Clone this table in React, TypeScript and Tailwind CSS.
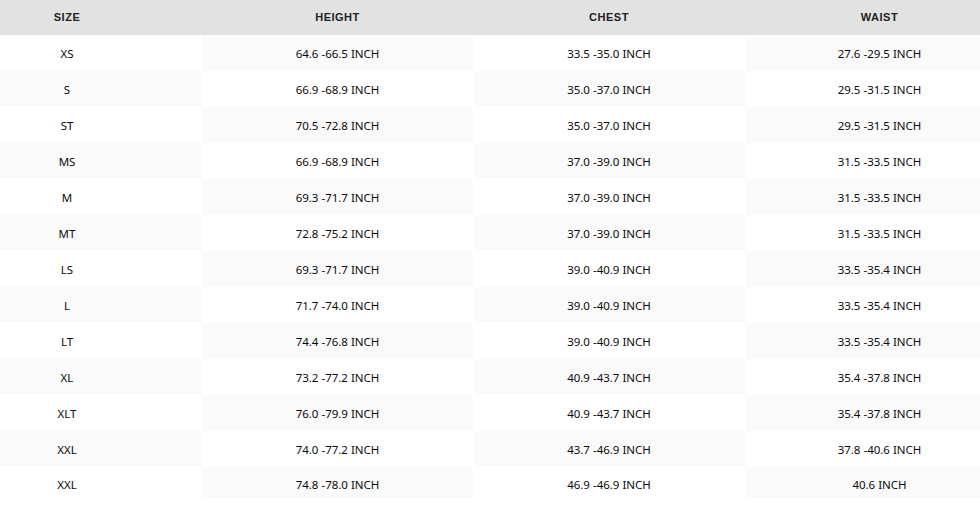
import React from "react";

const rows: [string, string, string, string][] = [
  ["XS", "64.6 -66.5 INCH", "33.5 -35.0 INCH", "27.6 -29.5 INCH"],
  ["S", "66.9 -68.9 INCH", "35.0 -37.0 INCH", "29.5 -31.5 INCH"],
  ["ST", "70.5 -72.8 INCH", "35.0 -37.0 INCH", "29.5 -31.5 INCH"],
  ["MS", "66.9 -68.9 INCH", "37.0 -39.0 INCH", "31.5 -33.5 INCH"],
  ["M", "69.3 -71.7 INCH", "37.0 -39.0 INCH", "31.5 -33.5 INCH"],
  ["MT", "72.8 -75.2 INCH", "37.0 -39.0 INCH", "31.5 -33.5 INCH"],
  ["LS", "69.3 -71.7 INCH", "39.0 -40.9 INCH", "33.5 -35.4 INCH"],
  ["L", "71.7 -74.0 INCH", "39.0 -40.9 INCH", "33.5 -35.4 INCH"],
  ["LT", "74.4 -76.8 INCH", "39.0 -40.9 INCH", "33.5 -35.4 INCH"],
  ["XL", "73.2 -77.2 INCH", "40.9 -43.7 INCH", "35.4 -37.8 INCH"],
  ["XLT", "76.0 -79.9 INCH", "40.9 -43.7 INCH", "35.4 -37.8 INCH"],
  ["XXL", "74.0 -77.2 INCH", "43.7 -46.9 INCH", "37.8 -40.6 INCH"],
  ["XXL", "74.8 -78.0 INCH", "46.9 -46.9 INCH", "40.6 INCH"],
];

const headers = ["SIZE", "HEIGHT", "CHEST", "WAIST"];
const pads = ["pr-[68px]", "", "", "pl-[34px]"];

export default function App() {
  return (
    <div className="w-[980px] h-[511px] bg-white">
      <div className="grid grid-cols-[202px_271px_272px_235px]">
        {headers.map((h, j) => (
          <div
            key={h}
            className={`h-[35px] bg-[#e2e2e2] flex items-center justify-center ${pads[j]} text-[11px] font-semibold tracking-[0.5px] text-[#222] [font-family:'Liberation_Sans',Arial,sans-serif]`}
          >
            {h}
          </div>
        ))}
        {rows.map((r, i) =>
          r.map((c, j) => (
            <div
              key={`${i}-${j}`}
              className={`${i === rows.length - 1 ? "h-[32px] pt-[4px]" : "h-[36px] pt-[2px]"} ${
                (i + j) % 2 === 1 ? "bg-[#fafafa]" : "bg-white"
              } flex items-center justify-center ${pads[j]} text-[11.5px] text-[#0a0a0a] [font-family:'Noto_Sans',sans-serif]`}
            >
              {c}
            </div>
          ))
        )}
      </div>
    </div>
  );
}
